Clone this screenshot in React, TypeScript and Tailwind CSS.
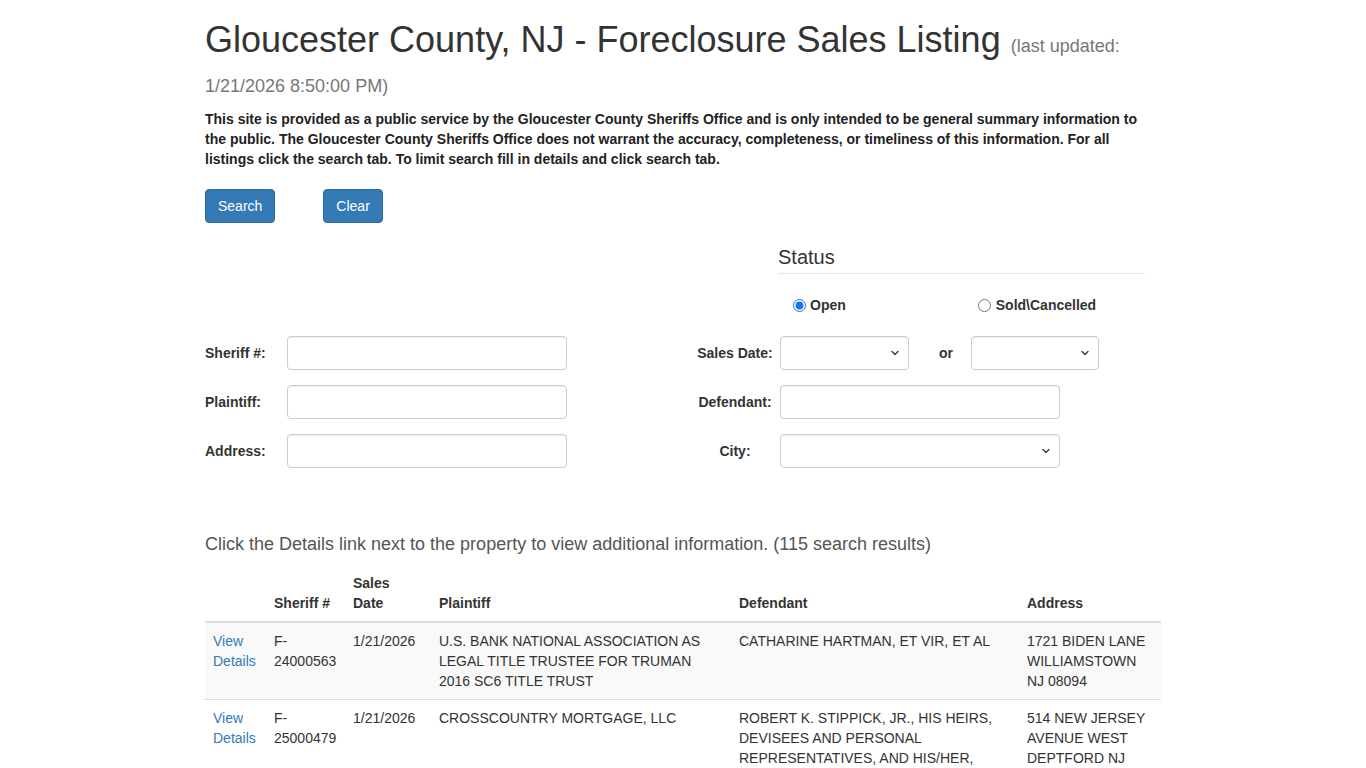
import React from "react";

const font = { fontFamily: '"Liberation Sans", Arial, Helvetica, sans-serif' };

function Chevron() {
  return (
    <svg width="10" height="7" viewBox="0 0 10 7" className="pointer-events-none absolute right-[9px] top-1/2 -translate-y-1/2">
      <path d="M2 2 L5 5 L8 2" fill="none" stroke="#444" strokeWidth="1.5" strokeLinecap="round" strokeLinejoin="round" />
    </svg>
  );
}

function Select({ w }: { w: string }) {
  return (
    <div className={`relative h-[34px] ${w}`}>
      <select className="h-full w-full appearance-none rounded-[4px] border border-[#ccc] bg-white shadow-[inset_0_1px_1px_rgba(0,0,0,0.075)] outline-none">
        <option></option>
      </select>
      <Chevron />
    </div>
  );
}

function Input({ w }: { w: string }) {
  return (
    <input
      type="text"
      className={`h-[34px] ${w} rounded-[4px] border border-[#ccc] bg-white shadow-[inset_0_1px_1px_rgba(0,0,0,0.075)] outline-none`}
    />
  );
}

const rows = [
  {
    sheriff: "F-24000563",
    date: "1/21/2026",
    plaintiff: "U.S. BANK NATIONAL ASSOCIATION AS LEGAL TITLE TRUSTEE FOR TRUMAN 2016 SC6 TITLE TRUST",
    defendant: "CATHARINE HARTMAN, ET VIR, ET AL",
    address: "1721 BIDEN LANE WILLIAMSTOWN NJ 08094",
  },
  {
    sheriff: "F-25000479",
    date: "1/21/2026",
    plaintiff: "CROSSCOUNTRY MORTGAGE, LLC",
    defendant:
      "ROBERT K. STIPPICK, JR., HIS HEIRS, DEVISEES AND PERSONAL REPRESENTATIVES, AND HIS/HER, THEIR, OR ANY OF THEIR SUCCESSORS IN RIGHT, TITLE AND INTEREST, ET AL",
    address: "514 NEW JERSEY AVENUE WEST DEPTFORD NJ 08096",
  },
  {
    sheriff: "F-25000512",
    date: "1/21/2026",
    plaintiff: "NEWREZ LLC D/B/A SHELLPOINT MORTGAGE SERVICING",
    defendant: "JOHN DOE, ET AL",
    address: "22 MAPLE AVENUE GLASSBORO NJ 08028",
  },
];

export default function App() {
  return (
    <div style={font} className="min-h-screen bg-white text-[14px] leading-[20px] text-[#333]">
      <div className="mx-auto w-[956px]">
        <h1 className="mt-[23px] text-[36px] leading-[34px] font-normal text-[#333]">
          Gloucester County, NJ - Foreclosure Sales Listing{" "}
          <small className="text-[18px] text-[#777]">(last updated: 1/21/2026 8:50:00 PM)</small>
        </h1>
        <p className="mt-[6px] font-bold text-[#222]">
          This site is provided as a public service by the Gloucester County Sheriffs Office and is only intended to be general summary information to the public. The Gloucester County Sheriffs Office does not warrant the accuracy, completeness, or timeliness of this information. For all listings click the search tab. To limit search fill in details and click search tab.
        </p>

        <div className="mt-[20px] flex gap-[48px]">
          <button className="h-[34px] rounded-[4px] border border-[#2e6da4] bg-[#337ab7] px-[12px] text-[14px] text-white">
            Search
          </button>
          <button className="h-[34px] rounded-[4px] border border-[#2e6da4] bg-[#337ab7] px-[12px] text-[14px] text-white">
            Clear
          </button>
        </div>

        <div className="ml-[573px] mt-[22px] w-[367px]">
          <div className="border-b border-[#e5e5e5] pb-[4px] text-[20px] leading-[24px] text-[#333]">Status</div>
          <div className="mt-[21px] flex items-center">
            <label className="ml-[15px] flex items-center gap-[4px] font-bold">
              <input type="radio" name="status" defaultChecked className="m-0 h-[13px] w-[13px] accent-[#1a73e8]" />
              Open
            </label>
            <label className="ml-[132px] flex items-center gap-[5px] font-bold">
              <input type="radio" name="status" className="m-0 h-[13px] w-[13px]" />
              Sold\Cancelled
            </label>
          </div>
        </div>

        <div className="mt-[21px] flex flex-col gap-[15px] font-bold">
          <div className="flex items-center">
            <div className="w-[82px]">Sheriff #:</div>
            <Input w="w-[280px]" />
            <div className="ml-[123px] w-[90px] text-center">Sales Date:</div>
            <Select w="w-[129px]" />
            <span className="ml-[30px] w-[14px]">or</span>
            <div className="ml-[18px]">
              <Select w="w-[128px]" />
            </div>
          </div>
          <div className="flex items-center">
            <div className="w-[82px]">Plaintiff:</div>
            <Input w="w-[280px]" />
            <div className="ml-[123px] w-[90px] text-center">Defendant:</div>
            <Input w="w-[280px]" />
          </div>
          <div className="flex items-center">
            <div className="w-[82px]">Address:</div>
            <Input w="w-[280px]" />
            <div className="ml-[123px] w-[90px] text-center">City:</div>
            <Select w="w-[280px]" />
          </div>
        </div>

        <div className="mt-[66px] text-[18px] leading-[20px] text-[#555]">
          Click the Details link next to the property to view additional information. (115 search results)
        </div>

        <table className="mt-[11px] w-[956px] table-fixed border-collapse text-left">
          <thead>
            <tr className="align-bottom font-bold">
              <th className="w-[61px] border-b-2 border-[#ddd] p-[8px]"></th>
              <th className="w-[79px] border-b-2 border-[#ddd] p-[8px]">Sheriff #</th>
              <th className="w-[86px] border-b-2 border-[#ddd] p-[8px]">Sales Date</th>
              <th className="w-[300px] border-b-2 border-[#ddd] p-[8px]">Plaintiff</th>
              <th className="w-[288px] border-b-2 border-[#ddd] p-[8px]">Defendant</th>
              <th className="w-[142px] border-b-2 border-[#ddd] p-[8px]">Address</th>
            </tr>
          </thead>
          <tbody>
            {rows.map((r, i) => (
              <tr key={i} className={`align-top ${i % 2 === 0 ? "bg-[#f9f9f9]" : "bg-white"}`}>
                <td className={`p-[8px] ${i > 0 ? "border-t border-[#ddd]" : ""}`}>
                  <a href="#" className="text-[#337ab7]">View Details</a>
                </td>
                <td className={`p-[8px] ${i > 0 ? "border-t border-[#ddd]" : ""}`}>{r.sheriff}</td>
                <td className={`p-[8px] ${i > 0 ? "border-t border-[#ddd]" : ""}`}>{r.date}</td>
                <td className={`p-[8px] ${i > 0 ? "border-t border-[#ddd]" : ""}`}>{r.plaintiff}</td>
                <td className={`p-[8px] ${i > 0 ? "border-t border-[#ddd]" : ""}`}>{r.defendant}</td>
                <td className={`p-[8px] ${i > 0 ? "border-t border-[#ddd]" : ""}`}>{r.address}</td>
              </tr>
            ))}
          </tbody>
        </table>
      </div>
    </div>
  );
}
